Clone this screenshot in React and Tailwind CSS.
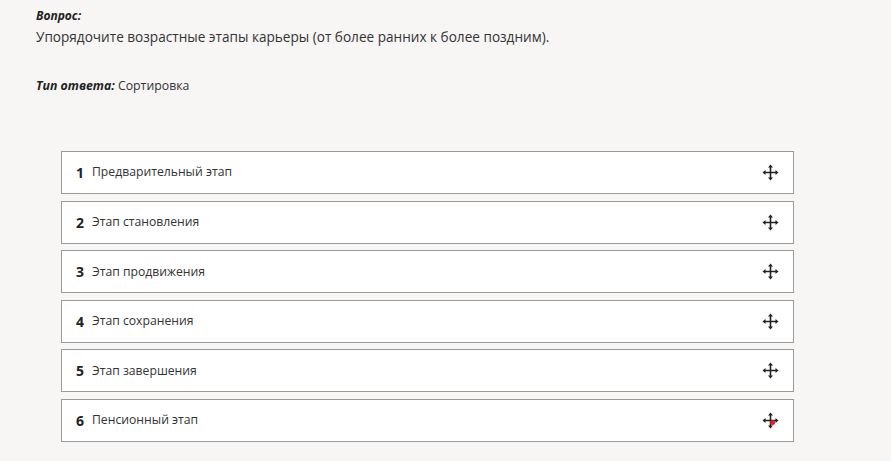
const items = [
  'Предварительный этап',
  'Этап становления',
  'Этап продвижения',
  'Этап сохранения',
  'Этап завершения',
  'Пенсионный этап',
];

const MoveIcon = ({ dot }) => (
  <span className="relative inline-block w-[17px] h-[17px]">
    <svg width="17" height="17" viewBox="0 0 17 17" className="text-[#222]">
      <path d="M8.5 3v11M3 8.5h11" stroke="currentColor" strokeWidth="1.6" />
      <path d="M8.5 0.5 L6 3.5 H11 Z" fill="currentColor" />
      <path d="M8.5 16.5 L6 13.5 H11 Z" fill="currentColor" />
      <path d="M0.5 8.5 L3.5 6 V11 Z" fill="currentColor" />
      <path d="M16.5 8.5 L13.5 6 V11 Z" fill="currentColor" />
    </svg>
    {dot && <span className="absolute left-[8px] top-[8px] w-[5px] h-[5px] rounded-full bg-[#e01b24]" />}
  </span>
);

export default function App() {
  return (
    <div className="w-[891px] h-[461px] bg-[#f7f6f4] font-['Open_Sans','Segoe_UI',sans-serif] text-[#333] overflow-hidden">
      <div className="pl-[36px] pt-[7px]">
        <div className="text-[12px] font-bold italic leading-[18px] text-[#222]">Вопрос:</div>
        <div className="text-[13.6px] leading-[20px] mt-[2px] text-[#333]">
          Упорядочите возрастные этапы карьеры (от более ранних к более поздним).
        </div>
        <div className="text-[12.3px] leading-[18px] mt-[30px]">
          <span className="font-bold italic text-[#222]">Тип ответа:</span> Сортировка
        </div>
      </div>
      <div className="ml-[61px] w-[733px] mt-[56px] flex flex-col gap-[6.6px]">
        {items.map((item, i) => (
          <div
            key={i}
            className="h-[43px] bg-white border border-[#9a9a9a] flex items-center pl-[14px] pr-[14px]"
          >
            <span className="text-[14px] font-bold text-[#222] w-[16px]">{i + 1}</span>
            <span className="text-[12.2px] text-[#333]">{item}</span>
            <span className="ml-auto flex items-center">
              <MoveIcon dot={i === 5} />
            </span>
          </div>
        ))}
      </div>
    </div>
  );
}
